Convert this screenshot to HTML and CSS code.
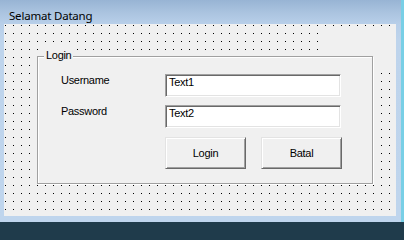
FILE: index.html
```html
<!DOCTYPE html>
<html>
<head>
<meta charset="utf-8">
<link rel="stylesheet" href="styles.css">
</head>
<body>
<div class="screen">
  <div class="top">
    <div class="window">
      <div class="titlebar"><span class="title">Selamat Datang</span></div>
      <div class="client">
        <div class="blank"></div>
        <div class="frame">
          <span class="caption">Login</span>
          <div class="frame-body">
            <div class="label">Username</div>
            <div class="textbox">Text1</div>
            <div class="label">Password</div>
            <div class="textbox">Text2</div>
            <div class="buttons">
              <div class="btn">Login</div>
              <div class="btn">Batal</div>
            </div>
          </div>
        </div>
      </div>
    </div>
    <div class="desk-right"></div>
  </div>
  <div class="desk-bottom"></div>
</div>
</body>
</html>
```
FILE: styles.css
```css
html, body {
  margin: 0;
  padding: 0;
  background: #1f3b4b;
}
.screen {
  width: 404px;
  height: 226px;
  overflow: hidden;
  display: flex;
  flex-direction: column;
}
.top {
  display: flex;
  height: 222px;
  flex: none;
}
.window {
  width: 401px;
  height: 222px;
  box-sizing: border-box;
  padding: 0 5px 6px 4px;
  display: flex;
  flex-direction: column;
  background: linear-gradient(to bottom, #98b4d4 0px, #aac3df 12px, #b8cfe9 24px, #bed4ec 40px, #bfd5ed 100%);
}
.desk-right {
  flex: 1;
  background: #78cfe6;
}
.desk-bottom {
  flex: 1;
  background: #1f3b4b;
}
.titlebar {
  height: 24px;
  flex: none;
  box-sizing: border-box;
  padding: 6px 0 0 5px;
}
.title {
  font-family: "Noto Sans", "Open Sans", sans-serif;
  font-size: 11.5px;
  letter-spacing: -0.2px;
  line-height: 16px;
  color: #000;
}
.client {
  width: 392px;
  height: 192px;
  flex: none;
  display: grid;
  grid-template-columns: 33px 283px 53px 23px;
  grid-template-rows: 4px 28px 14px 114px 32px;
  background-color: #f0f0f0;
  background-image:
    linear-gradient(to right, transparent 1px, #f0f0f0 1px),
    linear-gradient(to bottom, #000 1px, transparent 1px);
  background-size: 8px 8px;
  background-position: 1px 1px;
}
.blank {
  grid-column: 3 / 5;
  grid-row: 2 / 4;
  background: #f0f0f0;
}
.frame {
  grid-column: 2 / 4;
  grid-row: 3 / 5;
  position: relative;
  box-sizing: border-box;
  width: 336px;
  height: 128px;
  border: 1px solid #a0a0a0;
  box-shadow: inset 1px 1px #fff, 1px 1px #fff;
  background: #f0f0f0;
}
.caption {
  position: absolute;
  top: -8px;
  left: 6px;
  padding: 0 2px;
  background: #f0f0f0;
  font-family: "Liberation Sans", Arial, sans-serif;
  font-size: 11px;
  letter-spacing: -0.3px;
  line-height: 13px;
  color: #000;
}
.frame-body {
  display: grid;
  grid-template-columns: 104px 176px;
  grid-template-rows: 23px 23px 32px;
  row-gap: 8px;
  padding: 17px 0 0 23px;
  font-family: "Liberation Sans", Arial, sans-serif;
  font-size: 11px;
  letter-spacing: -0.3px;
  line-height: 13px;
  color: #000;
}
.label {
  white-space: nowrap;
}
.textbox {
  box-sizing: border-box;
  height: 23px;
  border: 1px solid;
  border-color: #a0a0a0 #fff #fff #a0a0a0;
  box-shadow: inset 1px 1px #696969, inset -1px -1px #e3e3e3;
  background: #fff;
  padding: 1px 0 0 3px;
}
.buttons {
  grid-column: 2;
  margin-top: 1px;
  display: flex;
  gap: 15px;
}
.btn {
  flex: none;
  box-sizing: border-box;
  width: 81px;
  height: 32px;
  border: 1px solid;
  border-color: #e3e3e3 #696969 #696969 #e3e3e3;
  box-shadow: inset 1px 1px #fff, inset -1px -1px #a0a0a0;
  background: #f0f0f0;
  display: flex;
  align-items: center;
  justify-content: center;
  padding-top: 1px;
}
```
